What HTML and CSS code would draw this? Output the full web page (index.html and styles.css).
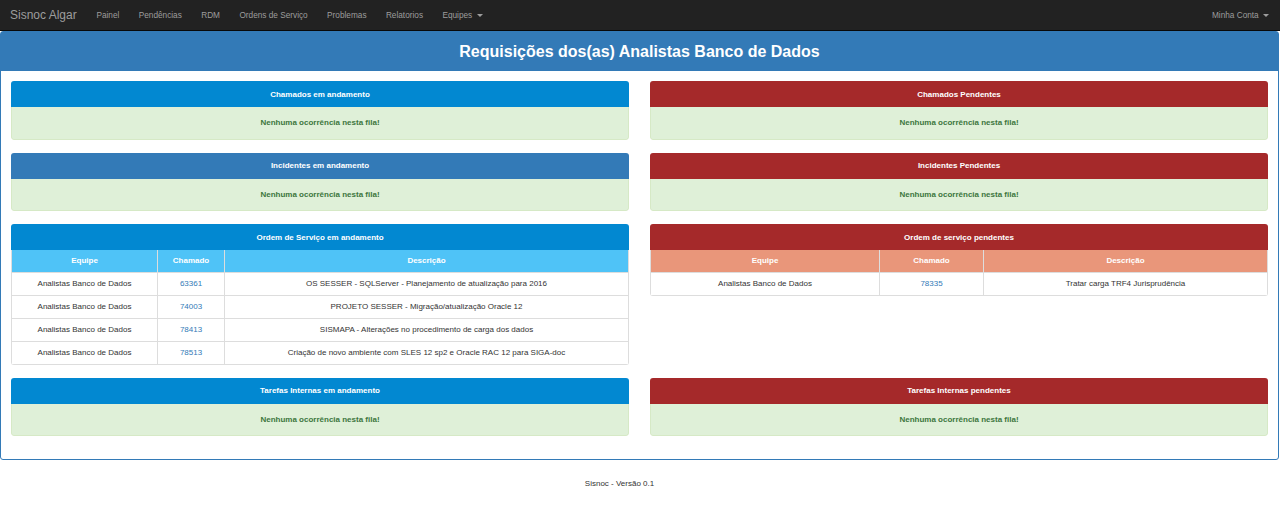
FILE: index.html
```html
<!DOCTYPE html>
<html lang="pt-BR">
<head>
<meta charset="utf-8">
<title>Sisnoc Algar</title>
<link rel="stylesheet" href="styles.css">
</head>
<body>
<nav class="navbar">
  <div class="nav-left">
    <a class="brand" href="#">Sisnoc Algar</a>
    <ul class="nav-links">
      <li><a href="#">Painel</a></li>
      <li><a href="#">Pendências</a></li>
      <li><a href="#">RDM</a></li>
      <li><a href="#">Ordens de Serviço</a></li>
      <li><a href="#">Problemas</a></li>
      <li><a href="#">Relatorios</a></li>
      <li><a href="#">Equipes <span class="caret"></span></a></li>
    </ul>
  </div>
  <ul class="nav-links nav-right">
    <li><a href="#">Minha Conta <span class="caret"></span></a></li>
  </ul>
</nav>

<div class="main-panel">
  <div class="main-heading">Requisições dos(as) Analistas Banco de Dados</div>
  <div class="main-body">
    <div class="grid">
      <section class="panel">
        <div class="panel-head head-blue">Chamados em andamento</div>
        <div class="empty">Nenhuma ocorrência nesta fila!</div>
      </section>
      <section class="panel">
        <div class="panel-head head-red">Chamados Pendentes</div>
        <div class="empty">Nenhuma ocorrência nesta fila!</div>
      </section>

      <section class="panel">
        <div class="panel-head head-primary">Incidentes em andamento</div>
        <div class="empty">Nenhuma ocorrência nesta fila!</div>
      </section>
      <section class="panel">
        <div class="panel-head head-red">Incidentes Pendentes</div>
        <div class="empty">Nenhuma ocorrência nesta fila!</div>
      </section>

      <section class="panel">
        <div class="panel-head head-blue">Ordem de Serviço em andamento</div>
        <table class="tbl tbl-blue">
          <thead>
            <tr><th class="c-equipe-l">Equipe</th><th class="c-chamado-l">Chamado</th><th>Descrição</th></tr>
          </thead>
          <tbody>
            <tr><td>Analistas Banco de Dados</td><td><a href="#">63361</a></td><td>OS SESSER - SQLServer - Planejamento de atualização para 2016</td></tr>
            <tr><td>Analistas Banco de Dados</td><td><a href="#">74003</a></td><td>PROJETO SESSER - Migração/atualização Oracle 12</td></tr>
            <tr><td>Analistas Banco de Dados</td><td><a href="#">78413</a></td><td>SISMAPA - Alterações no procedimento de carga dos dados</td></tr>
            <tr><td>Analistas Banco de Dados</td><td><a href="#">78513</a></td><td>Criação de novo ambiente com SLES 12 sp2 e Oracle RAC 12 para SIGA-doc</td></tr>
          </tbody>
        </table>
      </section>
      <section class="panel">
        <div class="panel-head head-red">Ordem de serviço pendentes</div>
        <table class="tbl tbl-salmon">
          <thead>
            <tr><th class="c-equipe-r">Equipe</th><th class="c-chamado-r">Chamado</th><th>Descrição</th></tr>
          </thead>
          <tbody>
            <tr><td>Analistas Banco de Dados</td><td><a href="#">78335</a></td><td>Tratar carga TRF4 Jurisprudência</td></tr>
          </tbody>
        </table>
      </section>

      <section class="panel">
        <div class="panel-head head-blue">Tarefas Internas em andamento</div>
        <div class="empty">Nenhuma ocorrência nesta fila!</div>
      </section>
      <section class="panel">
        <div class="panel-head head-red">Tarefas Internas pendentes</div>
        <div class="empty">Nenhuma ocorrência nesta fila!</div>
      </section>
    </div>
  </div>
</div>

<footer class="footer">Sisnoc - Versão 0.1</footer>
</body>
</html>
```

FILE: styles.css
```css
* { box-sizing: border-box; }

body {
  margin: 0;
  font-family: "Liberation Sans", Arial, sans-serif;
  font-size: 8px;
  color: #333;
  background: #fff;
}

a { text-decoration: none; }

.navbar {
  height: 31px;
  background: #222;
  border-bottom: 1px solid #080808;
  display: flex;
  justify-content: space-between;
  align-items: center;
  padding: 0 10px;
}

.nav-left {
  display: flex;
  align-items: center;
}

.brand {
  color: #9d9d9d;
  font-size: 12px;
  margin-right: 10px;
}

.nav-links {
  list-style: none;
  margin: 0;
  padding: 0;
  display: flex;
}

.nav-links a {
  display: block;
  color: #9d9d9d;
  font-size: 8.25px;
  padding: 0 9.7px;
}

.nav-right a { padding-right: 1px; }

.caret {
  display: inline-block;
  width: 0;
  height: 0;
  margin-left: 2px;
  vertical-align: middle;
  border-top: 3px solid #9d9d9d;
  border-left: 3px solid transparent;
  border-right: 3px solid transparent;
}

.main-panel {
  margin: 0 1px 0 0;
  border: 1px solid #337ab7;
  border-radius: 3px;
}

.main-heading {
  height: 39px;
  background: #337ab7;
  color: #fff;
  font-weight: bold;
  font-size: 16px;
  display: flex;
  align-items: center;
  justify-content: center;
}

.main-body {
  padding: 10px 10px 23px 10px;
}

.grid {
  display: grid;
  grid-template-columns: 1fr 1fr;
  column-gap: 21px;
  row-gap: 13px;
  align-items: start;
}

.panel {
  border-radius: 3px;
  overflow: hidden;
}

.panel-head {
  height: 26px;
  display: flex;
  align-items: center;
  justify-content: center;
  color: #fff;
  font-weight: bold;
  font-size: 8px;
}

.head-blue { background: #0288d1; }
.head-primary { background: #337ab7; }
.head-red { background: #a5292a; }

.empty {
  height: 32.5px;
  background: #dff0d8;
  color: #3c763d;
  font-weight: bold;
  font-size: 8px;
  display: flex;
  align-items: center;
  justify-content: center;
  border: 1px solid #d6e9c6;
  border-top: none;
  border-radius: 0 0 3px 3px;
}

.tbl {
  width: 100%;
  border-collapse: collapse;
  font-size: 8px;
  text-align: center;
}

.tbl th {
  height: 22px;
  color: #fff;
  font-weight: bold;
  border-left: 1px solid #ddd;
  border-right: 1px solid #ddd;
}

.tbl-blue th { background: #4fc3f7; }
.tbl-salmon th { background: #e9967a; }

.tbl td {
  height: 23px;
  border: 1px solid #ddd;
  color: #333;
}

.tbl td a { color: #337ab7; }

.c-equipe-l { width: 146px; }
.c-chamado-l { width: 67px; }
.c-equipe-r { width: 229px; }
.c-chamado-r { width: 104px; }

.footer {
  text-align: center;
  padding: 19px 41px 0 0;
  font-size: 8px;
  color: #333;
}
```
